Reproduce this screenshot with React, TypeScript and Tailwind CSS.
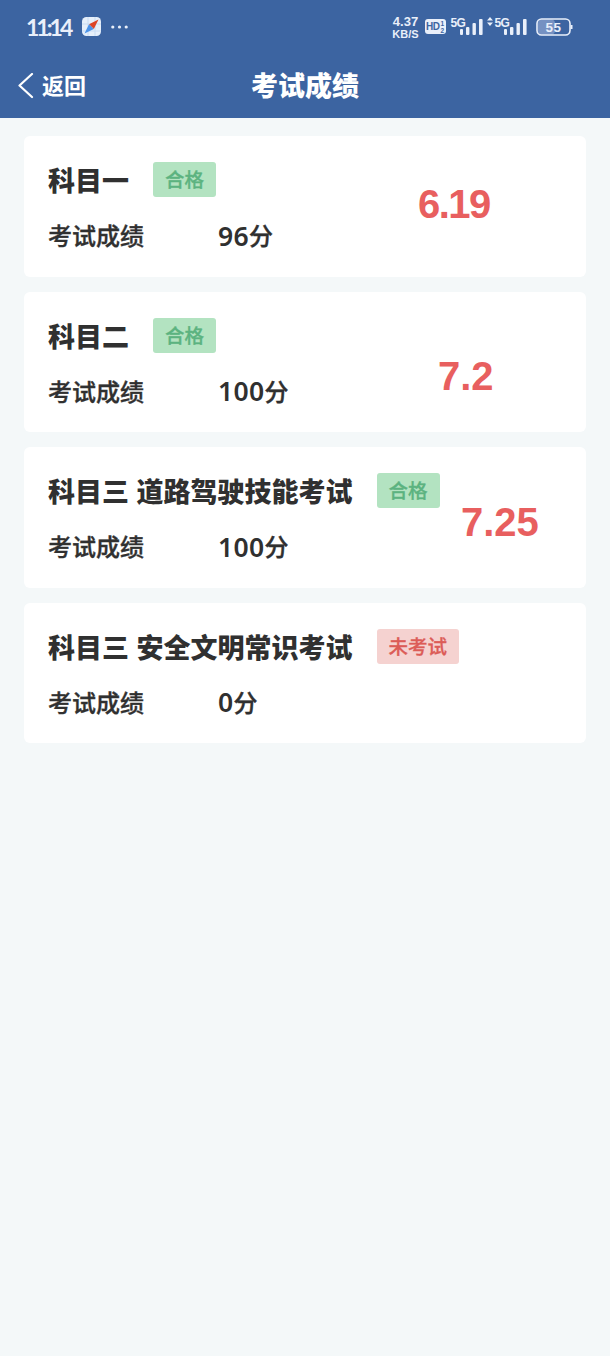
interface Exam {
  subject: string;
  status: string;
  passed: boolean;
  score: number;
  note?: string;
  notePosition?: string;
}

const exams: Exam[] = [
  {
    subject: "科目一",
    status: "合格",
    passed: true,
    score: 96,
    note: "6.19",
    notePosition: "left-[394px] top-[46px] tracking-[-1.5px]",
  },
  {
    subject: "科目二",
    status: "合格",
    passed: true,
    score: 100,
    note: "7.2",
    notePosition: "left-[414px] top-[62px]",
  },
  {
    subject: "科目三 道路驾驶技能考试",
    status: "合格",
    passed: true,
    score: 100,
    note: "7.25",
    notePosition: "left-[437px] top-[53px]",
  },
  {
    subject: "科目三 安全文明常识考试",
    status: "未考试",
    passed: false,
    score: 0,
  },
];

function Signal() {
  return (
    <div className="relative h-5 w-[33px]">
      <span className="absolute left-0 top-0 text-[12px] leading-3 font-bold tracking-[-0.7px]">5G</span>
      <svg className="absolute left-[9px] top-0" width="24" height="20" fill="currentColor">
        <rect x="0" y="12" width="3" height="6" rx="1" />
        <rect x="6" y="10" width="3.4" height="8" rx="1" />
        <rect x="12.5" y="6" width="3.4" height="12" rx="1" />
        <rect x="19" y="2" width="3.6" height="16" rx="1" />
      </svg>
    </div>
  );
}

function StatusBar() {
  return (
    <div className="flex h-[53px] items-center justify-between pl-[26px] pr-[36.5px] text-[#e9effa]">
      <div className="flex items-center">
        <span className="w-[47px] font-['Lato',sans-serif] text-[23px] leading-6 font-bold tracking-[-3px] whitespace-nowrap">11:14</span>
        <svg className="ml-[9px]" width="19" height="19" viewBox="0 0 19 19">
          <rect width="19" height="19" rx="4.5" fill="#e6effa" />
          <path d="M6 0v19M0 7h19M13 0v19M0 14h19" stroke="#c8dcf3" strokeWidth="1" />
          <path d="M16.5 2.5 7 7.2 11.8 12z" fill="#dd4426" />
          <path d="M2.5 16.5 7 7.2 11.8 12z" fill="#4d94e8" />
        </svg>
        <svg className="ml-[10px]" width="18" height="4" fill="currentColor">
          <circle cx="1.8" cy="2" r="1.6" />
          <circle cx="8.5" cy="2" r="1.6" />
          <circle cx="15.2" cy="2" r="1.6" />
        </svg>
      </div>
      <div className="flex items-center">
        <div className="flex w-[28px] flex-col items-center pt-[2px] text-[11px] font-bold whitespace-nowrap">
          <span className="text-[13px] leading-[12px]">4.37</span>
          <span className="leading-[12px]">KB/S</span>
        </div>
        <div className="ml-[5px] flex h-[15px] w-[21px] items-center justify-center rounded-[3px] bg-[#e9effa] text-[#3c64a1]">
          <span className="text-[10px] leading-none font-bold tracking-[-0.5px]">HD</span>
          <span className="ml-px flex flex-col text-[6.5px] leading-[7px] font-bold">
            <span>1</span>
            <span>2</span>
          </span>
        </div>
        <div className="ml-[5px]">
          <Signal />
        </div>
        <svg className="mb-[11px] ml-[3px]" width="6" height="9" fill="currentColor">
          <path d="M3 0 6 3.5H0zM3 9 0 5.5h6z" />
        </svg>
        <div className="ml-[2px]">
          <Signal />
        </div>
        <svg className="ml-[8px]" width="38" height="18" viewBox="0 0 38 18">
          <rect x="2" y="1.5" width="17" height="15" rx="4" fill="#7591c2" />
          <rect x="1" y="1" width="33" height="16" rx="4.5" fill="none" stroke="#e9effa" strokeWidth="1.6" />
          <path d="M35.5 7v4" stroke="#e9effa" strokeWidth="2" />
          <text x="17.5" y="13.8" textAnchor="middle" fontSize="13.5" fontWeight="700" letterSpacing="0.6" fill="#e9effa">
            55
          </text>
        </svg>
      </div>
    </div>
  );
}

function Header() {
  return (
    <header className="h-[118px] bg-[#3c64a1] text-white">
      <StatusBar />
      <div className="grid h-[65px] grid-cols-3 items-center px-[18px]">
        <button className="flex items-center gap-[8px] text-[22px] font-bold">
          <svg width="16" height="26" viewBox="0 0 16 26" fill="none" stroke="currentColor" strokeWidth="2.2" strokeLinecap="round" strokeLinejoin="round">
            <path d="M14 1 1.5 12.5 14 24" />
          </svg>
          <span className="pt-px">返回</span>
        </button>
        <h1 className="pt-[3px] text-center text-[27px] font-black">考试成绩</h1>
      </div>
    </header>
  );
}

function ExamCard({ exam }: { exam: Exam }) {
  return (
    <section className="relative h-[140.5px] rounded-[6px] bg-white pl-6 pt-[26px]">
      <div className="flex h-[35px] items-center gap-6">
        <h2 className="pt-[6px] text-[27px] leading-none font-black whitespace-pre">{exam.subject}</h2>
        <span
          className={`flex h-[35px] items-center rounded-[3px] px-3 pt-[3px] text-[19.5px] font-medium [-webkit-text-stroke:0.3px_currentColor] ${
            exam.passed ? "bg-[#b3e3c1] text-[#5cb380]" : "bg-[#f5d2d0] text-[#dc5c57]"
          }`}
        >
          {exam.status}
        </span>
      </div>
      <div className="mt-[21px] flex h-[36px] items-center text-[24px] leading-none font-medium">
        <span className="w-[170px] pt-[2px] [-webkit-text-stroke:0.35px_currentColor]">考试成绩</span>
        <span className="flex items-center">
          <span className="font-['Noto_Sans',sans-serif] text-[26.5px] font-semibold tracking-[0.3px]">{exam.score}</span>
          <span className="pt-[2px] [-webkit-text-stroke:0.35px_currentColor]">分</span>
        </span>
      </div>
      {exam.note && (
        <span className={`absolute font-['Liberation_Sans',sans-serif] text-[40px] leading-[44px] font-bold text-[#e85f5f] ${exam.notePosition}`}>
          {exam.note}
        </span>
      )}
    </section>
  );
}

export default function App() {
  return (
    <div className="min-h-[1356px] w-full bg-[#f4f8f9] font-['Liberation_Sans','Noto_Sans_CJK_SC',sans-serif] text-[#303030]">
      <Header />
      <main className="flex flex-col gap-[15px] px-6 pt-[18px]">
        {exams.map((exam) => (
          <ExamCard key={exam.subject} exam={exam} />
        ))}
      </main>
    </div>
  );
}
